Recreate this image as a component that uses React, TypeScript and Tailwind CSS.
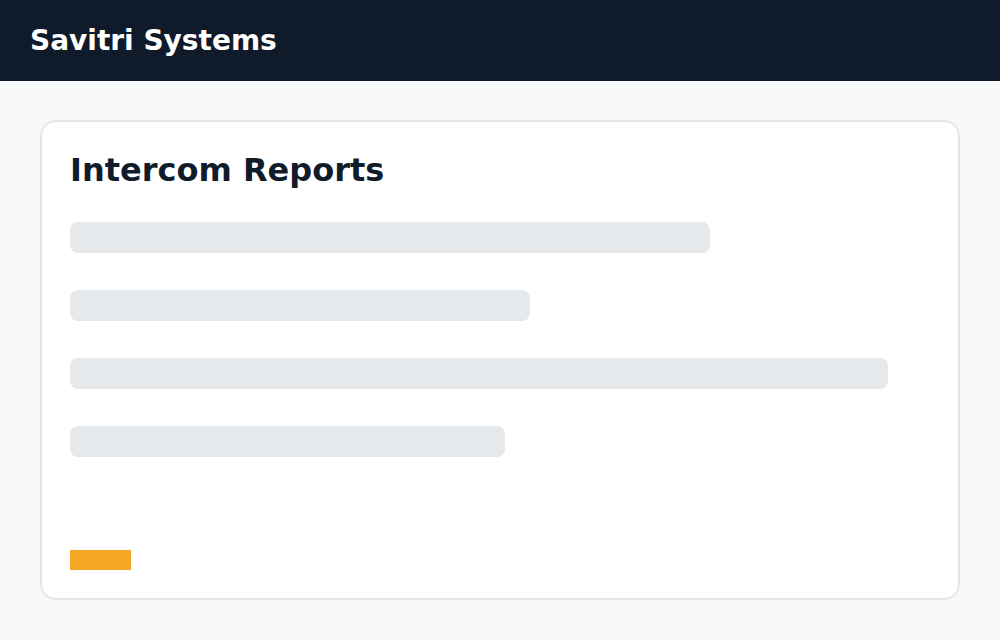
export default function App() {
  const bars = [640, 460, 818, 435];
  return (
    <div className="w-[1000px] h-[640px] bg-[#f7f8fa] flex flex-col" style={{ fontFamily: '"DejaVu Sans", sans-serif' }}>
      <header className="h-[81px] bg-[#0f1b2b] flex items-center px-[30px]">
        <h1 className="text-white font-bold text-[28px] leading-none">Savitri Systems</h1>
      </header>
      <main className="px-10 pt-[39px]">
        <section className="h-[480px] bg-white border-2 border-[#e3e6ea] rounded-2xl px-7 pt-7 pb-7 flex flex-col">
          <h2 className="text-[#111c2b] font-bold text-[32px] leading-[40px]">Intercom Reports</h2>
          <div className="mt-8 flex flex-col gap-[37px]">
            {bars.map((w, i) => (
              <div key={i} className="h-[31px] bg-[#e6e9ec] rounded-lg" style={{ width: w }} />
            ))}
          </div>
          <div className="mt-auto w-[61px] h-[20px] bg-[#f5a826]" />
        </section>
      </main>
    </div>
  );
}
